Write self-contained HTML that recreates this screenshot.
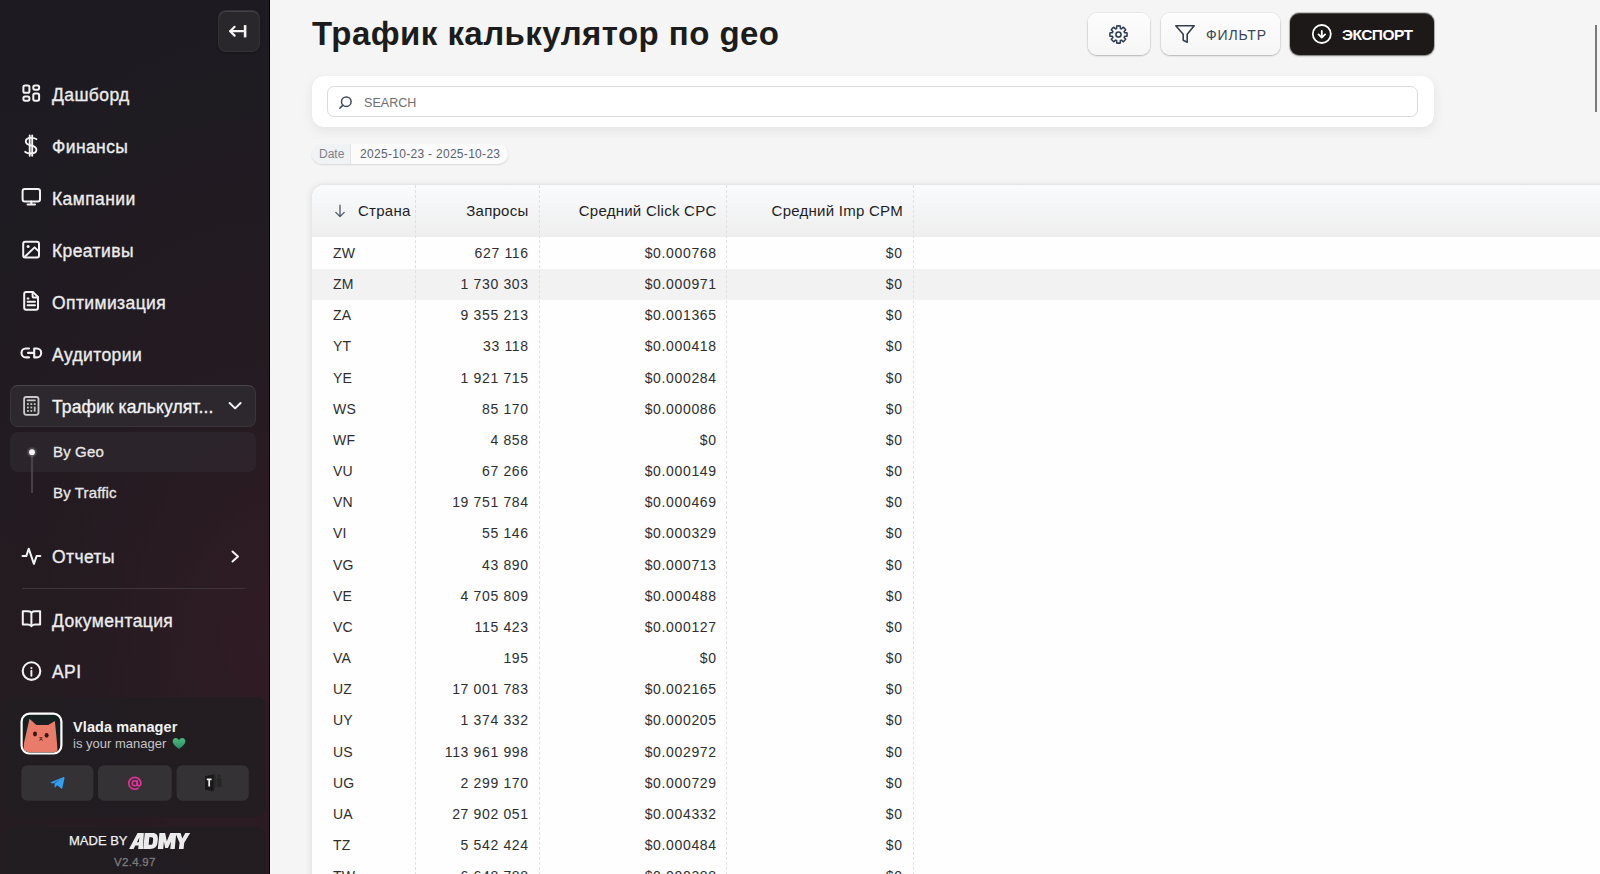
<!DOCTYPE html>
<html><head><meta charset="utf-8">
<style>
*{box-sizing:border-box;margin:0;padding:0}
html,body{width:1600px;height:874px;overflow:hidden;background:#f5f5f5;font-family:"Liberation Sans",sans-serif}
.sb{position:absolute;left:0;top:0;width:269px;height:874px;background:radial-gradient(ellipse 420px 620px at 270px 640px,rgba(62,28,38,.55) 0%,rgba(50,26,34,.3) 45%,rgba(30,27,33,0) 100%),linear-gradient(180deg,#1d1b21 0%,#1e1b21 40%,#221c21 100%);color:#ededed}
.sbedge{position:absolute;left:269px;top:0;width:1px;height:874px;background:#050405}
.ov{position:absolute;left:0;top:0}
.collapse{position:absolute;left:218px;top:10px;width:42px;height:42px;border-radius:8px;background:#2a272c;border:1px solid rgba(255,255,255,.05);box-shadow:inset 0 1px 0 rgba(255,255,255,.12),0 1px 2px rgba(0,0,0,.3)}
.tx{position:absolute;left:52px;font-size:17.5px;line-height:20px;color:#ececec;letter-spacing:0.4px;white-space:nowrap;-webkit-text-stroke:0.35px #ececec}
.active{position:absolute;left:10px;top:385px;width:246px;height:42px;border-radius:8px;background:#2c282d;border:1px solid #3a353a;border-top-color:#4a454a}
.subbox{position:absolute;left:10px;top:432px;width:246px;height:40px;border-radius:8px;background:rgba(48,44,50,.6)}
.sub{position:absolute;left:53px;font-size:15px;line-height:18px;color:#e8e8e8;white-space:nowrap;-webkit-text-stroke:0.3px #e8e8e8;font-variant-ligatures:none;letter-spacing:0.15px}
.mgr{position:absolute;left:5px;top:697px;width:261px;height:120px;border-radius:10px;background:rgba(32,30,33,.75)}
.foot{position:absolute;left:5px;top:827px;width:261px;height:60px;border-radius:10px;background:rgba(32,30,33,.75)}
h1{position:absolute;left:312px;top:15px;font-size:33px;line-height:38px;font-weight:bold;color:#1c1c1c;letter-spacing:0.45px;white-space:nowrap}
.btn{position:absolute;top:13px;height:42px;border-radius:9px;background:linear-gradient(#fdfdfd,#f6f6f6);box-shadow:0 1px 2px rgba(0,0,0,.22),0 0 0 1px rgba(0,0,0,.05),inset 0 1px 0 #fff}
.btn.dark{background:#1e1919;box-shadow:0 1px 2px rgba(0,0,0,.4),0 0 0 1px rgba(0,0,0,.2),inset 0 1px 0 rgba(255,255,255,.2)}
.scard{position:absolute;left:312px;top:76px;width:1122px;height:51px;background:#fff;border-radius:12px;box-shadow:0 4px 12px rgba(0,0,0,.075),0 0 1px rgba(0,0,0,.06)}
.sinput{position:absolute;left:15px;top:10px;width:1091px;height:31px;border:1px solid #dadada;border-radius:7px;background:#fff}
.chip{position:absolute;left:312px;top:144px;height:20px;width:196px;border-radius:11px;background:#fbfbfb;box-shadow:0 1px 2px rgba(0,0,0,.12);font-size:12px;color:#5a6270;overflow:hidden}
.table{position:absolute;left:312px;top:185px;width:1300px;height:700px;background:#fefefe;border-radius:12px 0 0 0;box-shadow:-2px 0 7px rgba(0,0,0,.07),0 -1px 3px rgba(0,0,0,.04)}
.thead{position:absolute;left:0;top:0;width:100%;height:52px;background:linear-gradient(#fafbfd,#eeeeee);border-radius:12px 0 0 0}
.th{position:absolute;top:0;height:52px;line-height:52px;font-size:15px;color:#1e1e1e;letter-spacing:0.25px;white-space:nowrap}
.rows{position:absolute;left:0;top:53px;width:100%}
.tr{position:relative;height:31.16px;width:100%}
.tr.hl{background:#f2f2f2}
.td{position:absolute;top:0;height:31.16px;line-height:31.16px;font-size:14px;color:#2e2e2e;letter-spacing:0.65px;white-space:nowrap}
.c1{left:21px;letter-spacing:0.2px}
.c2{right:calc(100% - 216.7px)}
.c3{right:calc(100% - 404.7px)}
.c4{right:calc(100% - 590.7px)}
.vl{position:absolute;top:0;height:700px;width:0;border-left:1px dashed #e0e0e0}
</style></head><body>
<div class="sb">
  <div class="sbedge"></div>
  <div class="collapse"></div>
  <div class="active"></div>
  <div class="subbox"></div>
  <div class="mgr"></div>
  <div class="foot"></div>
  <svg class="ov" width="270" height="874" viewBox="0 0 270 874">
    <!-- collapse arrow -->
    <g stroke="#f4f4f4" stroke-width="2.2" fill="none" stroke-linecap="round" stroke-linejoin="round">
      <path d="M230.2 31.2H243"/><path d="M234.6 26.8L230.2 31.2L234.6 35.6"/>
    </g>
    <path d="M245.1 25.1V37.4" stroke="#f4f4f4" stroke-width="2.6" stroke-linecap="butt"/>
    <!-- dashboard -->
    <g fill="none" stroke="#f2f2f2" stroke-width="2">
      <rect x="23.4" y="85.5" width="6" height="7.3" rx="1.6"/>
      <rect x="33.3" y="85.5" width="5.8" height="4.2" rx="1.6"/>
      <rect x="23.4" y="96.6" width="6" height="4.1" rx="1.6"/>
      <rect x="33.3" y="93.5" width="5.8" height="7.2" rx="1.6"/>
    </g>
    <!-- dollar -->
    <g fill="none" stroke="#f2f2f2" stroke-width="1.9" stroke-linecap="round">
      <path d="M29.7 135.5V155.8M32.2 135.5V155.8"/>
      <path d="M36.4 139.2C35.6 138.4 34 137.9 31 137.9C27.8 137.9 25.8 139.4 25.8 141.6C25.8 143.9 27.9 144.8 31 145.5C34.2 146.2 36.4 147.2 36.4 149.7C36.4 152 34.2 153.3 31 153.3C28.2 153.3 26.1 152.8 25.2 151.8"/>
    </g>
    <!-- monitor -->
    <g fill="none" stroke="#f2f2f2" stroke-width="2" stroke-linecap="round">
      <rect x="22.6" y="189" width="17.4" height="12.4" rx="2.2"/>
      <path d="M31.3 201.5V204.6M27.5 204.6H35"/>
    </g>
    <!-- image -->
    <g fill="none" stroke="#f2f2f2" stroke-width="2" stroke-linejoin="round">
      <rect x="23.2" y="241.7" width="15.8" height="15.7" rx="2"/>
      <path d="M24.5 257L34.6 247.4L39 251.6"/>
    </g>
    <circle cx="28.1" cy="246.6" r="1.5" fill="#f2f2f2"/>
    <!-- document -->
    <g fill="none" stroke="#f2f2f2" stroke-width="2" stroke-linejoin="round" stroke-linecap="round">
      <path d="M24.2 294.1C24.2 292.9 25 292.1 26.2 292.1H33.1L38 297V307.7C38 308.9 37.2 309.7 36 309.7H26.2C25 309.7 24.2 308.9 24.2 307.7Z"/>
      <path d="M32.6 292.3V296.6C32.6 297.1 33 297.5 33.5 297.5H37.8"/>
      <path d="M27.6 298.5H28.5M27.6 301.8H35M27.6 305.2H35"/>
    </g>
    <!-- link -->
    <g fill="none" stroke="#f2f2f2" stroke-width="2.1" stroke-linecap="round" stroke-linejoin="round">
      <path d="M29 348.5H25.8C23.3 348.5 21.5 350.5 21.5 352.9C21.5 355.3 23.3 357.4 25.8 357.4H29"/>
      <path d="M34.2 348.5H36.8C39.3 348.5 41.2 350.5 41.2 352.9C41.2 355.3 39.3 357.4 36.8 357.4H34.2Z"/>
      <path d="M28 352.9H34"/>
    </g>
    <!-- calculator -->
    <g fill="none" stroke="#c9c9c9" stroke-width="1.8">
      <rect x="24.1" y="397" width="14.4" height="17.8" rx="2.2"/>
    </g>
    <path d="M27.4 400.4H35" stroke="#c9c9c9" stroke-width="1.6" stroke-linecap="round"/>
    <g fill="#c4c4c4">
      <rect x="27" y="403.2" width="1.8" height="1.8"/><rect x="30.4" y="403.2" width="1.8" height="1.8"/><rect x="33.8" y="403.2" width="1.8" height="1.8"/>
      <rect x="27" y="406.6" width="1.8" height="1.8"/><rect x="30.4" y="406.6" width="1.8" height="1.8"/><rect x="33.8" y="406.6" width="1.8" height="5"/>
      <rect x="27" y="410" width="1.8" height="1.8"/><rect x="30.4" y="410" width="1.8" height="1.8"/>
    </g>
    <path d="M229.6 403L235.1 408.4L240.6 403" fill="none" stroke="#f2f2f2" stroke-width="2" stroke-linecap="round" stroke-linejoin="round"/>
    <!-- sub line + dot -->
    <path d="M32 452V493" stroke="#6a6568" stroke-width="1"/>
    <circle cx="32" cy="452.2" r="5.5" fill="rgba(255,255,255,.08)"/><circle cx="32" cy="452.2" r="4.2" fill="rgba(255,255,255,.12)"/>
    <circle cx="32" cy="452.2" r="2.9" fill="#f6f6f6"/>
    <!-- activity -->
    <path d="M22.5 556.1H26.3L28.7 548.7L33.9 563.8L36.6 556.1H40.3" fill="none" stroke="#f2f2f2" stroke-width="2" stroke-linecap="round" stroke-linejoin="round"/>
    <path d="M232.5 551.5L238 556.5L232.5 561.5" fill="none" stroke="#f2f2f2" stroke-width="2" stroke-linecap="round" stroke-linejoin="round"/>
    <!-- book -->
    <g fill="none" stroke="#f2f2f2" stroke-width="2" stroke-linejoin="round">
      <path d="M31.4 612.5C30.3 611.6 29.2 611.3 27.5 611.3H22.8V624.5H27.5C29.2 624.5 30.3 624.9 31.4 626.2C32.5 624.9 33.6 624.5 35.3 624.5H40.1V611.3H35.3C33.6 611.3 32.5 611.6 31.4 612.5Z"/>
      <path d="M31.4 612.5V626"/>
    </g>
    <!-- info -->
    <circle cx="31.5" cy="671.1" r="8.8" fill="none" stroke="#f2f2f2" stroke-width="2.1"/>
    <circle cx="31.4" cy="668" r="1.1" fill="#f2f2f2"/>
    <path d="M31.4 670.7V675.8" stroke="#f2f2f2" stroke-width="1.9" stroke-linecap="round"/>
    <!-- divider -->
    <path d="M22 588.5H245" stroke="#3d3539" stroke-width="1"/>
    <!-- manager buttons -->
    <rect x="21.3" y="765.3" width="72" height="35.5" rx="6" fill="#353235"/>
    <rect x="98" y="765.3" width="73.8" height="35.5" rx="6" fill="#353235"/>
    <rect x="176.6" y="765.3" width="72.1" height="35.5" rx="6" fill="#353235"/>
    <path d="M50.8 782.3L63.6 777.1C64.2 776.9 64.6 777.3 64.5 777.9L62.4 788C62.3 788.6 61.7 788.9 61.2 788.5L57.2 785.3L55.3 787.3C55 787.6 54.6 787.5 54.6 787.1V783.5L61 778.8L53.6 783.4L51 782.9C50.5 782.8 50.4 782.5 50.8 782.3Z" fill="#2f9ff0"/>
    <g fill="none" stroke="#e2339a" stroke-width="1.9" stroke-linecap="round" transform="translate(134.8,783.3) scale(0.86) translate(-134.5,-783)">
      <circle cx="134.5" cy="783" r="2.9"/>
      <path d="M137.4 780.2V783.8C137.4 785.2 138.4 786 139.5 786C140.8 786 141.5 784.8 141.5 783C141.5 779.1 138.4 776.1 134.5 776.1C130.6 776.1 127.5 779.1 127.5 783C127.5 786.9 130.6 789.9 134.5 789.9C136.1 789.9 137.4 789.5 138.4 788.8"/>
    </g>
    <g>
      <rect x="212" y="776.5" width="4" height="12" rx="0.8" fill="#2a2a2a"/>
      <rect x="216.8" y="778" width="4.8" height="9" rx="1.2" fill="#262626"/>
      <circle cx="214.2" cy="775.8" r="1.6" fill="#2a2a2a"/><circle cx="219.2" cy="776" r="1.5" fill="#262626"/>
      <path d="M205 776.2L213.6 774.4V791.5L205 789.6Z" fill="#181818"/>
      <path d="M206.8 779.3H211.6M209.2 779.3V786.4" stroke="#f0f0f0" stroke-width="1.7"/>
    </g>
    <!-- avatar -->
    <rect x="21.6" y="713.6" width="39.8" height="39.9" rx="8" fill="#172021" stroke="#ffffff" stroke-width="2.2"/>
    <clipPath id="av"><rect x="22.7" y="714.7" width="37.6" height="37.7" rx="7"/></clipPath>
    <g clip-path="url(#av)">
      <path d="M23.5 752.5L24 743L29.5 718.8L36.3 725H48.2L54.9 720.9L57 743L57.6 752.5Z" fill="#e87b6a"/>
      <ellipse cx="35" cy="734" rx="2" ry="2.4" fill="#3b1414"/>
      <ellipse cx="46.6" cy="735.3" rx="2" ry="2.4" fill="#3b1414"/>
      <path d="M39.4 737.8H42.6M41 737.8V739.5M39.3 740.3L41 739.4L42.7 740.3" fill="none" stroke="#3b1414" stroke-width="0.8"/>
    </g>
    <!-- heart -->
    <defs><linearGradient id="hg" x1="0" y1="0" x2="0" y2="1"><stop offset="0" stop-color="#4fba7a"/><stop offset="1" stop-color="#2a8a6a"/></linearGradient></defs>
    <path d="M179 749C177 747.4 172.7 744.4 172.7 741.3C172.7 739.5 174 738.1 175.6 738.1C177 738.1 178.3 739 179 740.2C179.7 739 181 738.1 182.4 738.1C184 738.1 185.4 739.5 185.4 741.3C185.4 744.4 181 747.4 179 749Z" fill="url(#hg)"/>
    <!-- ADMY logo -->
    <g transform="translate(129,833) scale(0.9,1)" fill="#ececec">
      <path d="M0 16L9.5 0H16.5L15.5 16H10.2L10.6 12.5H7L5.1 16Z M8.8 9.2H10.9L11.5 4.5Z"/>
      <path d="M15.8 16L17.5 0H26C30.8 0 32.5 2.6 32 6.8L31.6 9.8C31 14 28.2 16 23.8 16Z M21.8 11.8H24C25.6 11.8 26.3 11 26.5 9.4L26.8 6.6C27 5 26.4 4.2 24.8 4.2H22.6Z"/>
      <path d="M32 16L33.8 0H40.2L42 8.2L45.8 0H52.5L50.8 16H45.8L46.6 8.5L43.3 15H40.2L38.8 8.5L38 16Z"/>
      <path d="M51.5 0H57.3L59.2 5.6L62.5 0H68L61.4 9.8L60.6 16H55.4L56.2 9.8Z"/>
    </g>
  </svg>

  <div class="tx" style="top:85px">Дашборд</div>
  <div class="tx" style="top:137px">Финансы</div>
  <div class="tx" style="top:189px">Кампании</div>
  <div class="tx" style="top:241px">Креативы</div>
  <div class="tx" style="top:293px">Оптимизация</div>
  <div class="tx" style="top:345px">Аудитории</div>
  <div class="tx" style="top:397px;color:#f6f6f6;letter-spacing:0.1px">Трафик калькулят...</div>
  <div class="sub" style="top:443px">By Geo</div>
  <div class="sub" style="top:484px">By Traffic</div>
  <div class="tx" style="top:547px">Отчеты</div>
  <div class="tx" style="top:611px">Документация</div>
  <div class="tx" style="top:662px">API</div>

  <div style="position:absolute;left:73px;top:718.5px;font-size:14.5px;font-weight:bold;color:#f2f2f2;letter-spacing:0.1px">Vlada manager</div>
  <div style="position:absolute;left:73px;top:735.5px;font-size:13px;color:#c4c4c4;letter-spacing:0px">is your manager</div>

  <div style="position:absolute;left:69px;top:833px;font-size:13px;color:#f0f0f0;letter-spacing:0px;-webkit-text-stroke:0.25px #f0f0f0">MADE BY</div>
  <div style="position:absolute;left:114px;top:856px;font-size:11.5px;color:#7d7a7b;letter-spacing:0.3px;-webkit-text-stroke:0.3px #7d7a7b">V2.4.97</div>
</div>
<h1>Трафик калькулятор по geo</h1>
<div class="btn" style="left:1088px;width:62px">
  <svg style="position:absolute;left:19px;top:9.5px" width="23" height="23" viewBox="0 0 24 24"><g fill="none" stroke="#2f3d50" stroke-width="1.6" stroke-linejoin="round"><path d="M10.07 5.69L10.13 3.20A9.0 9.0 0 0 1 13.87 3.20L13.93 5.69A6.6 6.6 0 0 1 15.10 6.17L16.90 4.45A9.0 9.0 0 0 1 19.55 7.10L17.83 8.90A6.6 6.6 0 0 1 18.31 10.07L20.80 10.13A9.0 9.0 0 0 1 20.80 13.87L18.31 13.93A6.6 6.6 0 0 1 17.83 15.10L19.55 16.90A9.0 9.0 0 0 1 16.90 19.55L15.10 17.83A6.6 6.6 0 0 1 13.93 18.31L13.87 20.80A9.0 9.0 0 0 1 10.13 20.80L10.07 18.31A6.6 6.6 0 0 1 8.90 17.83L7.10 19.55A9.0 9.0 0 0 1 4.45 16.90L6.17 15.10A6.6 6.6 0 0 1 5.69 13.93L3.20 13.87A9.0 9.0 0 0 1 3.20 10.13L5.69 10.07A6.6 6.6 0 0 1 6.17 8.90L4.45 7.10A9.0 9.0 0 0 1 7.10 4.45L8.90 6.17A6.6 6.6 0 0 1 10.07 5.69Z"/><circle cx="12" cy="12" r="2.7"/></g></svg>
</div>
<div class="btn" style="left:1161px;width:119px">
  <svg style="position:absolute;left:13px;top:11px" width="22" height="20" viewBox="0 0 22 20"><path d="M1.8 1.8H20.2L13.2 10.2V18.2L9.2 16.2V10.2Z" fill="none" stroke="#34404f" stroke-width="1.6" stroke-linejoin="round"/></svg>
  <div style="position:absolute;left:45px;top:14px;font-size:14px;line-height:16px;color:#3a4657;letter-spacing:0.9px">ФИЛЬТР</div>
</div>
<div class="btn dark" style="left:1290px;width:144px">
  <svg style="position:absolute;left:21px;top:10px" width="22" height="22" viewBox="0 0 22 22"><g fill="none" stroke="#fff" stroke-width="1.8" stroke-linecap="round" stroke-linejoin="round"><circle cx="10.8" cy="11" r="9"/><path d="M10.8 8V14.6M7.5 11.4L10.8 14.7L14.1 11.4"/></g></svg>
  <div style="position:absolute;left:52px;top:12.7px;font-size:15.5px;line-height:18px;font-weight:bold;color:#fff;letter-spacing:-0.55px">ЭКСПОРТ</div>
</div>

<div class="scard"><div class="sinput">
  <svg style="position:absolute;left:10px;top:8px" width="15" height="15" viewBox="0 0 15 15"><g fill="none" stroke="#3e4a5b" stroke-width="1.5" stroke-linecap="round"><circle cx="8.3" cy="6.7" r="4.8"/><path d="M4.9 10.1L1.8 13.2"/></g></svg>
  <div style="position:absolute;left:36px;top:9px;font-size:12.5px;line-height:14px;color:#6e6e70;letter-spacing:0.05px">SEARCH</div>
</div></div>

<div class="chip">
  <div style="position:absolute;left:0;top:0;width:39px;height:20px;background:#f1f2f4;border-right:1px solid #e3e3e3"></div>
  <div style="position:absolute;left:7px;top:3.5px;line-height:13px;color:#7e8188">Date</div>
  <div style="position:absolute;left:48px;top:3.5px;line-height:13px;color:#5a6270;letter-spacing:0.3px">2025-10-23 - 2025-10-23</div>
</div>

<div style="position:absolute;left:1595px;top:25px;width:2px;height:87px;background:#7a7a7a"></div>

<div class="table">
  <div class="thead"></div>
  <svg style="position:absolute;left:21px;top:18px" width="14" height="16" viewBox="0 0 14 16"><path d="M7 2.2V13.6M2.8 9.4L7 13.6L11.2 9.4" fill="none" stroke="#4a5666" stroke-width="1.3" stroke-linecap="round" stroke-linejoin="round"/></svg>
  <div class="th" style="left:46px">Страна</div>
  <div class="th" style="right:calc(100% - 216.5px)">Запросы</div>
  <div class="th" style="right:calc(100% - 404.5px)">Средний Click CPC</div>
  <div class="th" style="right:calc(100% - 591px)">Средний Imp CPM</div>
  <div class="rows">
<div class="tr"><div class="td c1">ZW</div><div class="td c2">627 116</div><div class="td c3">$0.000768</div><div class="td c4">$0</div></div>
<div class="tr hl"><div class="td c1">ZM</div><div class="td c2">1 730 303</div><div class="td c3">$0.000971</div><div class="td c4">$0</div></div>
<div class="tr"><div class="td c1">ZA</div><div class="td c2">9 355 213</div><div class="td c3">$0.001365</div><div class="td c4">$0</div></div>
<div class="tr"><div class="td c1">YT</div><div class="td c2">33 118</div><div class="td c3">$0.000418</div><div class="td c4">$0</div></div>
<div class="tr"><div class="td c1">YE</div><div class="td c2">1 921 715</div><div class="td c3">$0.000284</div><div class="td c4">$0</div></div>
<div class="tr"><div class="td c1">WS</div><div class="td c2">85 170</div><div class="td c3">$0.000086</div><div class="td c4">$0</div></div>
<div class="tr"><div class="td c1">WF</div><div class="td c2">4 858</div><div class="td c3">$0</div><div class="td c4">$0</div></div>
<div class="tr"><div class="td c1">VU</div><div class="td c2">67 266</div><div class="td c3">$0.000149</div><div class="td c4">$0</div></div>
<div class="tr"><div class="td c1">VN</div><div class="td c2">19 751 784</div><div class="td c3">$0.000469</div><div class="td c4">$0</div></div>
<div class="tr"><div class="td c1">VI</div><div class="td c2">55 146</div><div class="td c3">$0.000329</div><div class="td c4">$0</div></div>
<div class="tr"><div class="td c1">VG</div><div class="td c2">43 890</div><div class="td c3">$0.000713</div><div class="td c4">$0</div></div>
<div class="tr"><div class="td c1">VE</div><div class="td c2">4 705 809</div><div class="td c3">$0.000488</div><div class="td c4">$0</div></div>
<div class="tr"><div class="td c1">VC</div><div class="td c2">115 423</div><div class="td c3">$0.000127</div><div class="td c4">$0</div></div>
<div class="tr"><div class="td c1">VA</div><div class="td c2">195</div><div class="td c3">$0</div><div class="td c4">$0</div></div>
<div class="tr"><div class="td c1">UZ</div><div class="td c2">17 001 783</div><div class="td c3">$0.002165</div><div class="td c4">$0</div></div>
<div class="tr"><div class="td c1">UY</div><div class="td c2">1 374 332</div><div class="td c3">$0.000205</div><div class="td c4">$0</div></div>
<div class="tr"><div class="td c1">US</div><div class="td c2">113 961 998</div><div class="td c3">$0.002972</div><div class="td c4">$0</div></div>
<div class="tr"><div class="td c1">UG</div><div class="td c2">2 299 170</div><div class="td c3">$0.000729</div><div class="td c4">$0</div></div>
<div class="tr"><div class="td c1">UA</div><div class="td c2">27 902 051</div><div class="td c3">$0.004332</div><div class="td c4">$0</div></div>
<div class="tr"><div class="td c1">TZ</div><div class="td c2">5 542 424</div><div class="td c3">$0.000484</div><div class="td c4">$0</div></div>
<div class="tr"><div class="td c1">TW</div><div class="td c2">6 648 788</div><div class="td c3">$0.000388</div><div class="td c4">$0</div></div>  </div>
  <div class="vl" style="left:103px"></div>
  <div class="vl" style="left:227px"></div>
  <div class="vl" style="left:414px"></div>
  <div class="vl" style="left:601px"></div>
</div>
</body></html>
